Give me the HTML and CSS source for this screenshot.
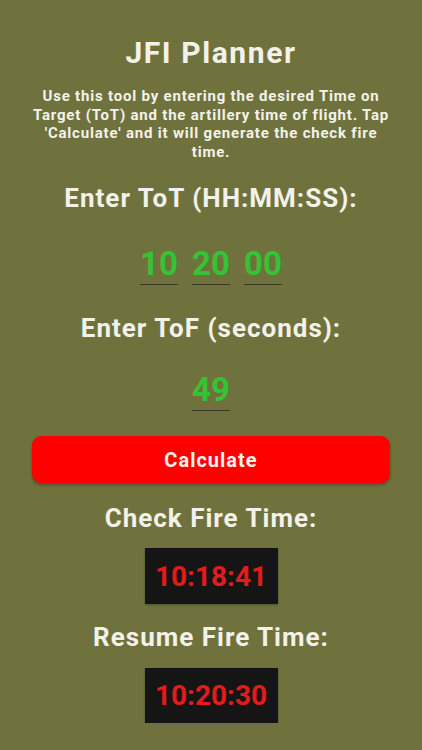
FILE: index.html
```html
<!DOCTYPE html>
<html>
<head>
<meta charset="utf-8">
<link rel="stylesheet" href="styles.css">
</head>
<body>
<div class="app">
  <h1 class="title">JFI Planner</h1>
  <p class="desc">Use this tool by entering the desired Time on Target (ToT) and the artillery time of flight. Tap 'Calculate' and it will generate the check fire time.</p>
  <h2 class="label label-tot">Enter ToT (HH:MM:SS):</h2>
  <div class="inputs inputs-tot">
    <input class="field" type="text" value="10">
    <input class="field" type="text" value="20">
    <input class="field" type="text" value="00">
  </div>
  <h2 class="label label-tof">Enter ToF (seconds):</h2>
  <div class="inputs inputs-tof">
    <input class="field" type="text" value="49">
  </div>
  <button class="calc">Calculate</button>
  <h2 class="label label-check">Check Fire Time:</h2>
  <div class="result result-check">10:18:41</div>
  <h2 class="label label-resume">Resume Fire Time:</h2>
  <div class="result result-resume">10:20:30</div>
</div>
</body>
</html>
```
FILE: styles.css
```css
html, body {
  margin: 0;
  padding: 0;
  background: #6f723c;
}
body {
  font-family: Roboto, "Noto Sans", sans-serif;
  color: #f3f2ea;
}
.app {
  display: flex;
  flex-direction: column;
  align-items: center;
  padding: 36px 32px 0;
  width: 422px;
  box-sizing: border-box;
}
.title {
  margin: 0;
  font-size: 30px;
  line-height: 34px;
  font-weight: 700;
  letter-spacing: 1.6px;
}
.desc {
  margin: 17px -6px 0;
  font-size: 15px;
  line-height: 18.5px;
  font-weight: 700;
  letter-spacing: 0.8px;
  text-align: center;
}
.label {
  margin: 0;
  font-size: 26px;
  line-height: 30px;
  font-weight: 700;
  letter-spacing: 1px;
}
.label-tot { margin-top: 22px; }
.label-tof { margin-top: 28px; }
.label-check { margin-top: 20px; }
.label-resume { margin-top: 18px; }
.inputs {
  display: flex;
  gap: 14px;
}
.inputs-tot { margin-top: 31px; }
.inputs-tof { margin-top: 27px; }
.field {
  width: 38px;
  padding: 0 0 2px;
  margin: 0;
  border: none;
  border-bottom: 1px solid #3a3b22;
  background: transparent;
  color: #35c335;
  font-family: Roboto, "Noto Sans", sans-serif;
  font-size: 33px;
  line-height: 38px;
  height: 41px;
  box-sizing: border-box;
  font-weight: 700;
  text-align: center;
  outline: none;
}
.calc {
  margin-top: 25px;
  width: 358px;
  height: 47px;
  border: none;
  border-radius: 9px;
  background: #ff0000;
  color: #f6f3ee;
  font-family: Roboto, "Noto Sans", sans-serif;
  font-size: 20px;
  font-weight: 700;
  letter-spacing: 1px;
  box-shadow: 0 2px 3px rgba(0, 0, 0, 0.3);
}
.result {
  width: 133px;
  height: 56px;
  box-sizing: border-box;
  background: #151515;
  color: #e31b1b;
  font-size: 28px;
  font-weight: 700;
  display: flex;
  align-items: center;
  justify-content: center;
  box-shadow: 0 1px 2px rgba(0, 0, 0, 0.3);
}
.result-check { margin-top: 15px; }
.result-resume { margin-top: 16px; height: 55px; }
```
